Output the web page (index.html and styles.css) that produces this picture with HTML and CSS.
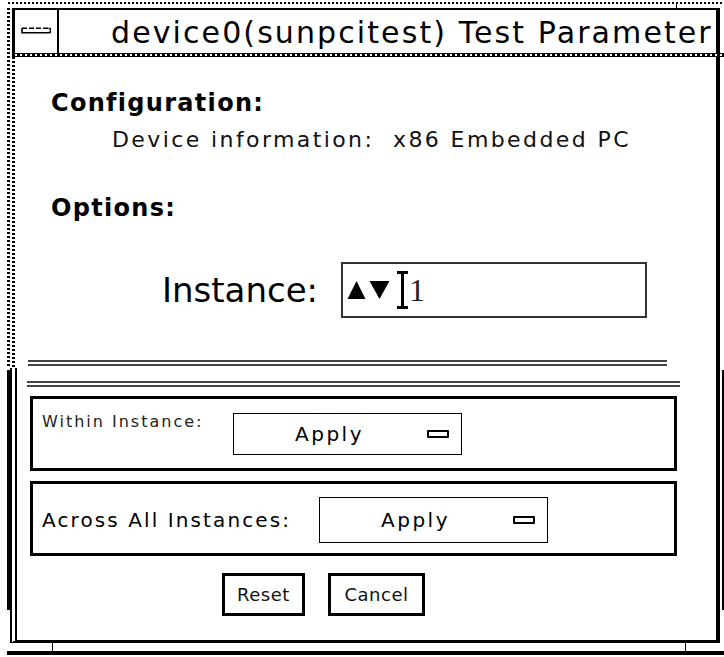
FILE: index.html
```html
<!DOCTYPE html>
<html lang="en">
<head>
<meta charset="UTF-8" />
<title>device0(sunpcitest) Test Parameter</title>
<link rel="stylesheet" href="styles.css">
</head>
<body>
<div class="desk">
  <div class="stipple-top"></div>
  <div class="window">
    <div class="upper">
      <div class="titlebar">
        <div class="menu-btn">
          <svg width="30" height="7" viewBox="0 0 30 7">
            <path d="M1 1.2H27" stroke="#000" stroke-width="1.6" stroke-dasharray="5 2" fill="none"/>
            <path d="M1 1V5.8H27.5A2.3 2.3 0 0 0 27.5 1.2" stroke="#000" stroke-width="1.6" fill="none"/>
          </svg>
        </div>
        <div class="title">device0(sunpcitest) Test Parameter</div>
      </div>
      <div class="title-rule"></div>
      <div class="pane">
        <div class="heading">Configuration:</div>
        <div class="info">Device information:&nbsp; x86 Embedded PC</div>
        <div class="heading options">Options:</div>
        <div class="instance-row">
          <span class="instance-label">Instance:</span>
          <div class="spin-field">
            <svg class="spin-arrows" width="44" height="22" viewBox="0 0 44 22">
              <polygon points="0.5,20 9.5,2 18.5,20" fill="#000"/>
              <polygon points="22.5,2 42.5,2 32.5,20" fill="#000"/>
            </svg>
            <svg class="ibeam" width="11" height="38" viewBox="0 0 11 38">
              <rect x="0" y="0" width="11" height="3" fill="#000"/>
              <rect x="4" y="0" width="3" height="38" fill="#000"/>
              <rect x="0" y="35" width="11" height="3" fill="#000"/>
            </svg>
            <span class="spin-value">1</span>
          </div>
        </div>
        <div class="rule rule-upper"></div>
      </div>
    </div>
    <div class="lower">
      <div class="rule rule-lower"></div>
      <div class="group group-within">
        <span class="group-label">Within Instance:</span>
        <div class="choice"><span>Apply</span><i class="choice-mark"></i></div>
      </div>
      <div class="group group-across">
        <span class="group-label">Across All Instances:</span>
        <div class="choice"><span>Apply</span><i class="choice-mark"></i></div>
      </div>
      <div class="actions">
        <button class="btn btn-reset">Reset</button>
        <button class="btn btn-cancel">Cancel</button>
      </div>
    </div>
    <div class="base"></div>
  </div>
</div>
</body>
</html>
```

FILE: styles.css
```css
body {
  margin: 0;
  background: #fff;
  color: #000;
  font-family: "DejaVu Sans", "Liberation Sans", sans-serif;
}
.desk {
  width: 724px;
  height: 657px;
  overflow: hidden;
  padding-top: 2px;
  box-sizing: border-box;
  background: #fff linear-gradient(#000, #000) 676px 4px / 1px 6px no-repeat;
}
.stipple-top {
  height: 2px;
  margin-left: 8px;
  background: repeating-linear-gradient(90deg, #000 0 2px, transparent 2px 4px);
}
.window {
  width: 717px;
  margin: 4px 0 0 7px;
  background:
    linear-gradient(#000, #000) 0 362px / 3px 240px no-repeat,
    linear-gradient(#000, #000) 715px 362px / 2px 240px no-repeat;
}

/* top half: title and configuration */
.upper {
  padding-left: 5px;
  background: repeating-linear-gradient(180deg, #000 0 2px, transparent 2px 4px) 0 0 / 3px 100% no-repeat;
}
.titlebar {
  display: flex;
  height: 45px;
  margin: 2px 4px 0 0;
  border: solid #000;
  border-width: 2px 4px 0 3px;
  box-sizing: border-box;
}
.menu-btn {
  width: 44px;
  border-right: 2px solid #000;
  display: flex;
  align-items: center;
  justify-content: center;
  padding-bottom: 3px;
  box-sizing: border-box;
  flex: none;
}
.title {
  margin-left: 52px;
  padding-top: 2px;
  font-size: 30px;
  line-height: 41px;
  letter-spacing: 2.1px;
  white-space: nowrap;
}
.title-rule {
  height: 2px;
  border-top: 1px solid #000;
  border-bottom: 1px solid #000;
  background: repeating-linear-gradient(90deg, #000 0 3px, #fff 3px 5px);
}
.pane {
  height: 311px;
  margin-right: 4px;
  border-right: 4px solid #000;
  box-sizing: border-box;
  padding: 33px 0 0 3px;
  background: repeating-linear-gradient(180deg, #000 0 2px, transparent 2px 4px) 0 0 / 3px 100% no-repeat;
}
.heading {
  margin-left: 36px;
  font-size: 24px;
  font-weight: bold;
  line-height: 26px;
  letter-spacing: 1.3px;
}
.info {
  margin: 11px 0 0 97px;
  font-size: 22px;
  line-height: 26px;
  letter-spacing: 2.4px;
  color: #111;
}
.options {
  margin-top: 42px;
}
.instance-row {
  display: flex;
  align-items: center;
  margin: 41px 0 0 147px;
}
.instance-label {
  width: 179px;
  font-size: 34px;
  line-height: 40px;
}
.spin-field {
  width: 306px;
  height: 56px;
  border: 2px solid #333;
  box-sizing: border-box;
  display: flex;
  align-items: center;
  padding-left: 4px;
}
.ibeam {
  margin-left: 6px;
}
.spin-value {
  margin-left: 1px;
  font-family: "Liberation Serif", serif;
  font-size: 32px;
  line-height: 40px;
  color: #222;
}
.rule {
  height: 2px;
  border-top: 2px solid #444;
  border-bottom: 2px solid #444;
}
.rule-upper {
  width: 639px;
  margin: 42px 0 0 13px;
}

/* bottom half: apply groups and buttons */
.lower {
  margin: 0 4px 0 3px;
  border-left: 7px double #000;
  border-right: 4px solid #000;
  border-bottom: 3px solid #000;
  padding: 13px 0 24px;
}
.rule-lower {
  width: 653px;
  margin-left: 10px;
}
.group {
  display: flex;
  margin: 9px 39px 0 13px;
  border: 3px solid #000;
}
.group-within {
  align-items: flex-start;
  padding: 14px 0 13px 9px;
}
.group-within .group-label {
  width: 191px;
  font-size: 16px;
  line-height: 18px;
  letter-spacing: 2px;
  color: #222;
}
.group-across {
  align-items: center;
  margin-top: 10px;
  padding: 13px 0 10px 9px;
}
.group-across .group-label {
  width: 277px;
  font-size: 20px;
  letter-spacing: 2.1px;
}
.choice {
  width: 229px;
  height: 42px;
  border: 1px solid #000;
  box-sizing: border-box;
  display: flex;
  align-items: center;
  padding: 0 12px 0 61px;
  font-size: 20px;
  letter-spacing: 2.5px;
}
.group-across .choice {
  height: 46px;
}
.choice-mark {
  margin-left: auto;
  width: 22px;
  height: 8px;
  border: 2px solid #000;
  border-radius: 1px;
  box-sizing: border-box;
}
.actions {
  display: flex;
  gap: 23px;
  margin: 17px 0 0 205px;
}
.btn {
  height: 43px;
  border: 3px solid #000;
  background: #fff;
  color: #111;
  font-family: "DejaVu Sans", sans-serif;
  font-size: 18px;
  letter-spacing: 0.5px;
  padding: 0;
}
.btn-reset {
  width: 83px;
}
.btn-cancel {
  width: 97px;
}
.base {
  height: 8px;
  border-bottom: 4px solid #000;
  background:
    linear-gradient(#000, #000) 45px 0 / 1px 8px no-repeat,
    linear-gradient(#000, #000) 678px 0 / 1px 8px no-repeat;
}
```
